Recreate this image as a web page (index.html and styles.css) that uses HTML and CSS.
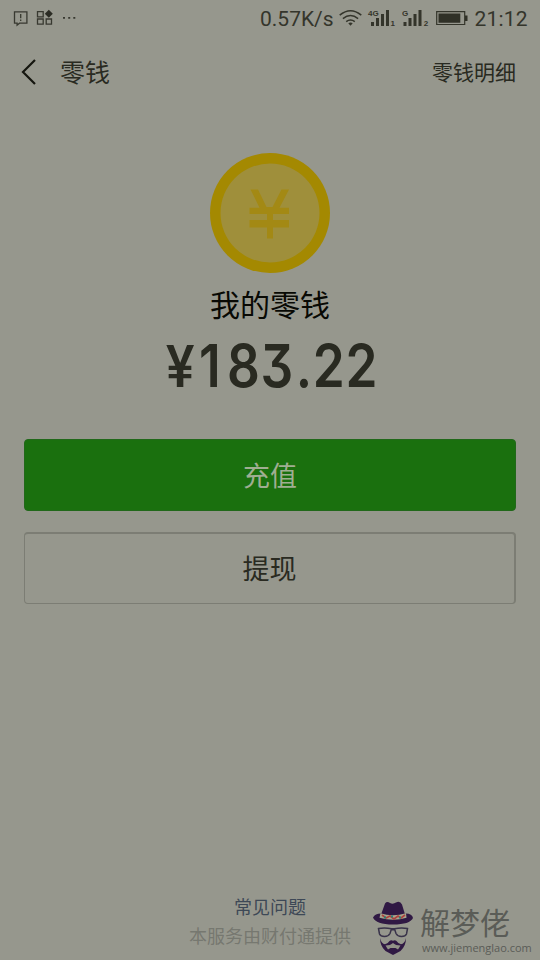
FILE: index.html
```
<!DOCTYPE html>
<html lang="zh-CN">
<head>
<meta charset="utf-8">
<title>零钱</title>
<link rel="stylesheet" href="styles.css">
</head>
<body>
<div class="screen">
  <div class="status">
    <svg class="status-left" width="70" height="36" viewBox="0 0 70 36" fill="none" stroke="#383930" stroke-width="1.3">
      <path d="M1.500 11.800h12.400v11.400H6.500l-2.400 2v-2H1.500z"/>
      <path d="M7.700 14v4.300M7.700 19.500v1.400"/>
      <path d="M24.500 11.700h5.700v5.100h-5.700zM24.500 19h5.700v5.100h-5.700zM33.200 19h5.300v5.100h-5.300z"/>
      <path d="M35.800 9.800l4 4-4 4-4-4z" fill="#2b2c24" stroke="none"/>
      <path d="M50 17.900h2M55.200 17.900h2M60.300 17.900h2" stroke-width="1.700"/>
    </svg>
    <span class="speed">0.57K/s</span>
    <svg class="wifi" width="24" height="36" viewBox="0 0 24 36" fill="none" stroke="#34352b" stroke-width="1.500">
      <path d="M.7 15.200Q11.500 6.300 22.300 15.200M3.900 18.600Q11.500 12.400 19.100 18.600M7.200 21.600Q11.500 18.300 15.800 21.600"/>
      <path d="M9.300 23.300Q11.500 21.700 13.700 23.300L11.500 25.800z" fill="#34352b" stroke="none"/>
    </svg>
    <svg class="signal" width="30" height="36" viewBox="0 0 30 36" fill="#34352b">
      <text class="network" x="1" y="16">4G</text>
      <path d="M4 22h3v4H4zM9 18h3v8H9zM14 14h3v12h-3zM19 10h3v16h-3z"/>
      <text class="network" x="23.500" y="26">1</text>
    </svg>
    <svg class="signal second" width="30" height="36" viewBox="0 0 30 36" fill="#34352b">
      <text class="network" x="0" y="16">G</text>
      <path d="M1.500 22h3v4h-3zM6.500 18h3v8h-3zM11.500 14h3v12h-3zM16.500 10h3v16h-3z"/>
      <text class="network" x="21.700" y="26">2</text>
    </svg>
    <svg class="battery" width="33" height="36" viewBox="0 0 33 36">
      <path d="M.7 11.700h28v12.800H.7z" fill="none" stroke="#34352b" stroke-width="1.200"/>
      <path d="M2.500 13.500h21.800v9.200H2.500zM29 15.500h2.500v5.500H29z" fill="#303127"/>
    </svg>
    <span class="clock">21:12</span>
  </div>
  <div class="nav">
    <svg width="16" height="28" viewBox="0 0 16 28"><path d="M14 2L2 14l12 12" fill="none" stroke="#15160f" stroke-width="2.200"/></svg>
    <span class="title">零钱</span>
    <span class="detail">零钱明细</span>
  </div>
  <div class="wallet">
    <svg width="120" height="120" viewBox="0 0 120 120">
      <circle cx="60" cy="60" r="60" fill="#a48901"/>
      <circle cx="60" cy="60" r="49.500" fill="#9f8f3b"/>
      <path d="M40.500 36.500H48L56.500 54h6L71.500 36.500H79L69.500 54.700H79V61H63v6h16v7.500H63v11h-6v-11H39.500V67H57v-6H39.500v-6.300H49.500z" fill="#a38914"/>
    </svg>
    <div class="label">我的零钱</div>
    <div class="amount"><span class="currency">¥</span><span class="value"><span class="one">1</span>83<span class="point">.</span>22</span></div>
  </div>
  <div class="actions">
    <div class="button primary">充值</div>
    <div class="button">提现</div>
  </div>
  <div class="footer">
    <div class="help">常见问题</div>
    <div class="provider">本服务由财付通提供</div>
  </div>
  <div class="brand">
    <svg width="42" height="56" viewBox="0 0 42 56">
      <path d="M8.500 16L13 3.500Q15 1 18 3q3 1.500 6-.5 4-2 6 2L33.500 16z" fill="#301944"/>
      <path d="M1 17.500Q3 13.500 9 13.500q12 4 25 0 6 0 7 4.500-3 6.500-20 6.500T1 17.500z" fill="#301944"/>
      <path d="M8.500 13.200q12 4 25.500 0l.5 4.500q-13 4.200-27 0z" fill="#a7a48d"/>
      <path d="M10 15l4 3 4-2 4 3 4-3 3 2 4-3" fill="none" stroke="#ae413d" stroke-width="1.600"/>
      <path d="M12 17.500h2m5-1h2m6 1h2" stroke="#298078" stroke-width="2"/>
      <path d="M6.500 28.500Q13 27.300 19.500 28.800h3Q29 27.300 35.500 28.500L34.500 34q-1 2.500-5 2.500T24 33.500l-1.200-3.700h-3.600L18 33.500q-1.500 3-5.500 3t-5-2.500z" fill="none" stroke="#39334a" stroke-width="1.500"/>
      <path d="M8 38q1.500 6 5 6.300 2.500-.3 4.500-3.300 1.500-1.500 3.500-.3 2-1.200 3.500.3 2 3 4.500 3.300 3.500-.3 5-6.300 0 8-5.500 13l-7.500 4-7.500-4Q8 46 8 38z" fill="#301944"/>
      <path d="M13.500 45.500q5 0 7.500-2.500 2.500 2.500 7.500 2.500l-2.500 4-2.500-1.500h-5L16 49.500z" fill="#929288"/>
    </svg>
    <div class="brand-text">
      <div class="brand-name">解梦佬</div>
      <div class="brand-url">www.jiemenglao.com</div>
    </div>
  </div>
</div>
</body>
</html>
```
FILE: styles.css
```
* { box-sizing: border-box; }
body {
  margin: 0;
  background: #96978d;
  color: #292a21;
  font-family: "Noto Sans CJK SC", sans-serif;
}
.screen {
  position: relative;
  display: flex;
  flex-direction: column;
  width: 540px;
  height: 960px;
  overflow: hidden;
}
.status {
  display: flex;
  height: 36px;
  padding-left: 13px;
  font-family: Roboto, sans-serif;
  font-size: 21px;
  line-height: 38px;
  color: #34352b;
}
.status svg { flex: none; }
.speed { width: 79px; margin-left: 177px; }
.signal { margin-left: 4px; }
.signal.second { margin-left: 5px; }
.network { font: 700 8px "Liberation Sans", sans-serif; }
.battery { margin-left: 4px; }
.clock { margin-left: 5.5px; letter-spacing: 0.2px; }
.nav {
  display: flex;
  align-items: center;
  height: 72px;
  padding: 0 24px 0 21px;
}
.title { margin-left: 23px; padding-bottom: 2px; font-size: 25px; }
.detail { margin-left: auto; padding-bottom: 2px; font-size: 21px; }
.wallet {
  display: flex;
  flex-direction: column;
  align-items: center;
  padding-top: 45px;
}
.label {
  margin-top: 8px;
  font-size: 30px;
  line-height: 44px;
  color: #080904;
}
.amount {
  display: flex;
  width: 210px;
  height: 76px;
  font-size: 60px;
  line-height: 82px;
}
.currency {
  flex: none;
  width: 33.5px;
  font-family: Roboto, sans-serif;
  font-weight: 500;
  transform: translate(1px, 1px) scaleX(0.89);
  transform-origin: left;
}
.value {
  flex: none;
  font-family: Inter, Roboto, sans-serif;
  font-size: 59px;
  font-weight: 600;
  font-feature-settings: "cv09";
  transform: scaleX(0.87);
  transform-origin: left;
  white-space: nowrap;
  letter-spacing: 0.8px;
}
.one { margin-right: 6.5px; }
.point { margin: 0 0 0 2px; }
.actions {
  display: flex;
  flex-direction: column;
  gap: 21px;
  padding: 38px 24px 0;
}
.button {
  height: 72px;
  border: 1px solid #7c7d74;
  border-top-width: 2px;
  border-right-width: 2px;
  border-radius: 4px;
  font-size: 27px;
  line-height: 68px;
  text-align: center;
}
.primary {
  border: 1px solid #21681a;
  background: #1a700e;
  color: #a0ae92;
  line-height: 69px;
}
.footer {
  margin-top: auto;
  padding-bottom: 10px;
  font-size: 18px;
  line-height: 29px;
  text-align: center;
}
.help { color: #3d4856; }
.provider { color: #767870; }
.brand {
  position: absolute;
  left: 372px;
  top: 900px;
  display: flex;
  color: #5a5c57;
}
.brand-text { margin-left: 6px; }
.brand-name { font-size: 30px; line-height: 42px; }
.brand-url {
  margin-left: 2px;
  font-family: "Open Sans", sans-serif;
  font-size: 11px;
  line-height: 12px;
}
```
